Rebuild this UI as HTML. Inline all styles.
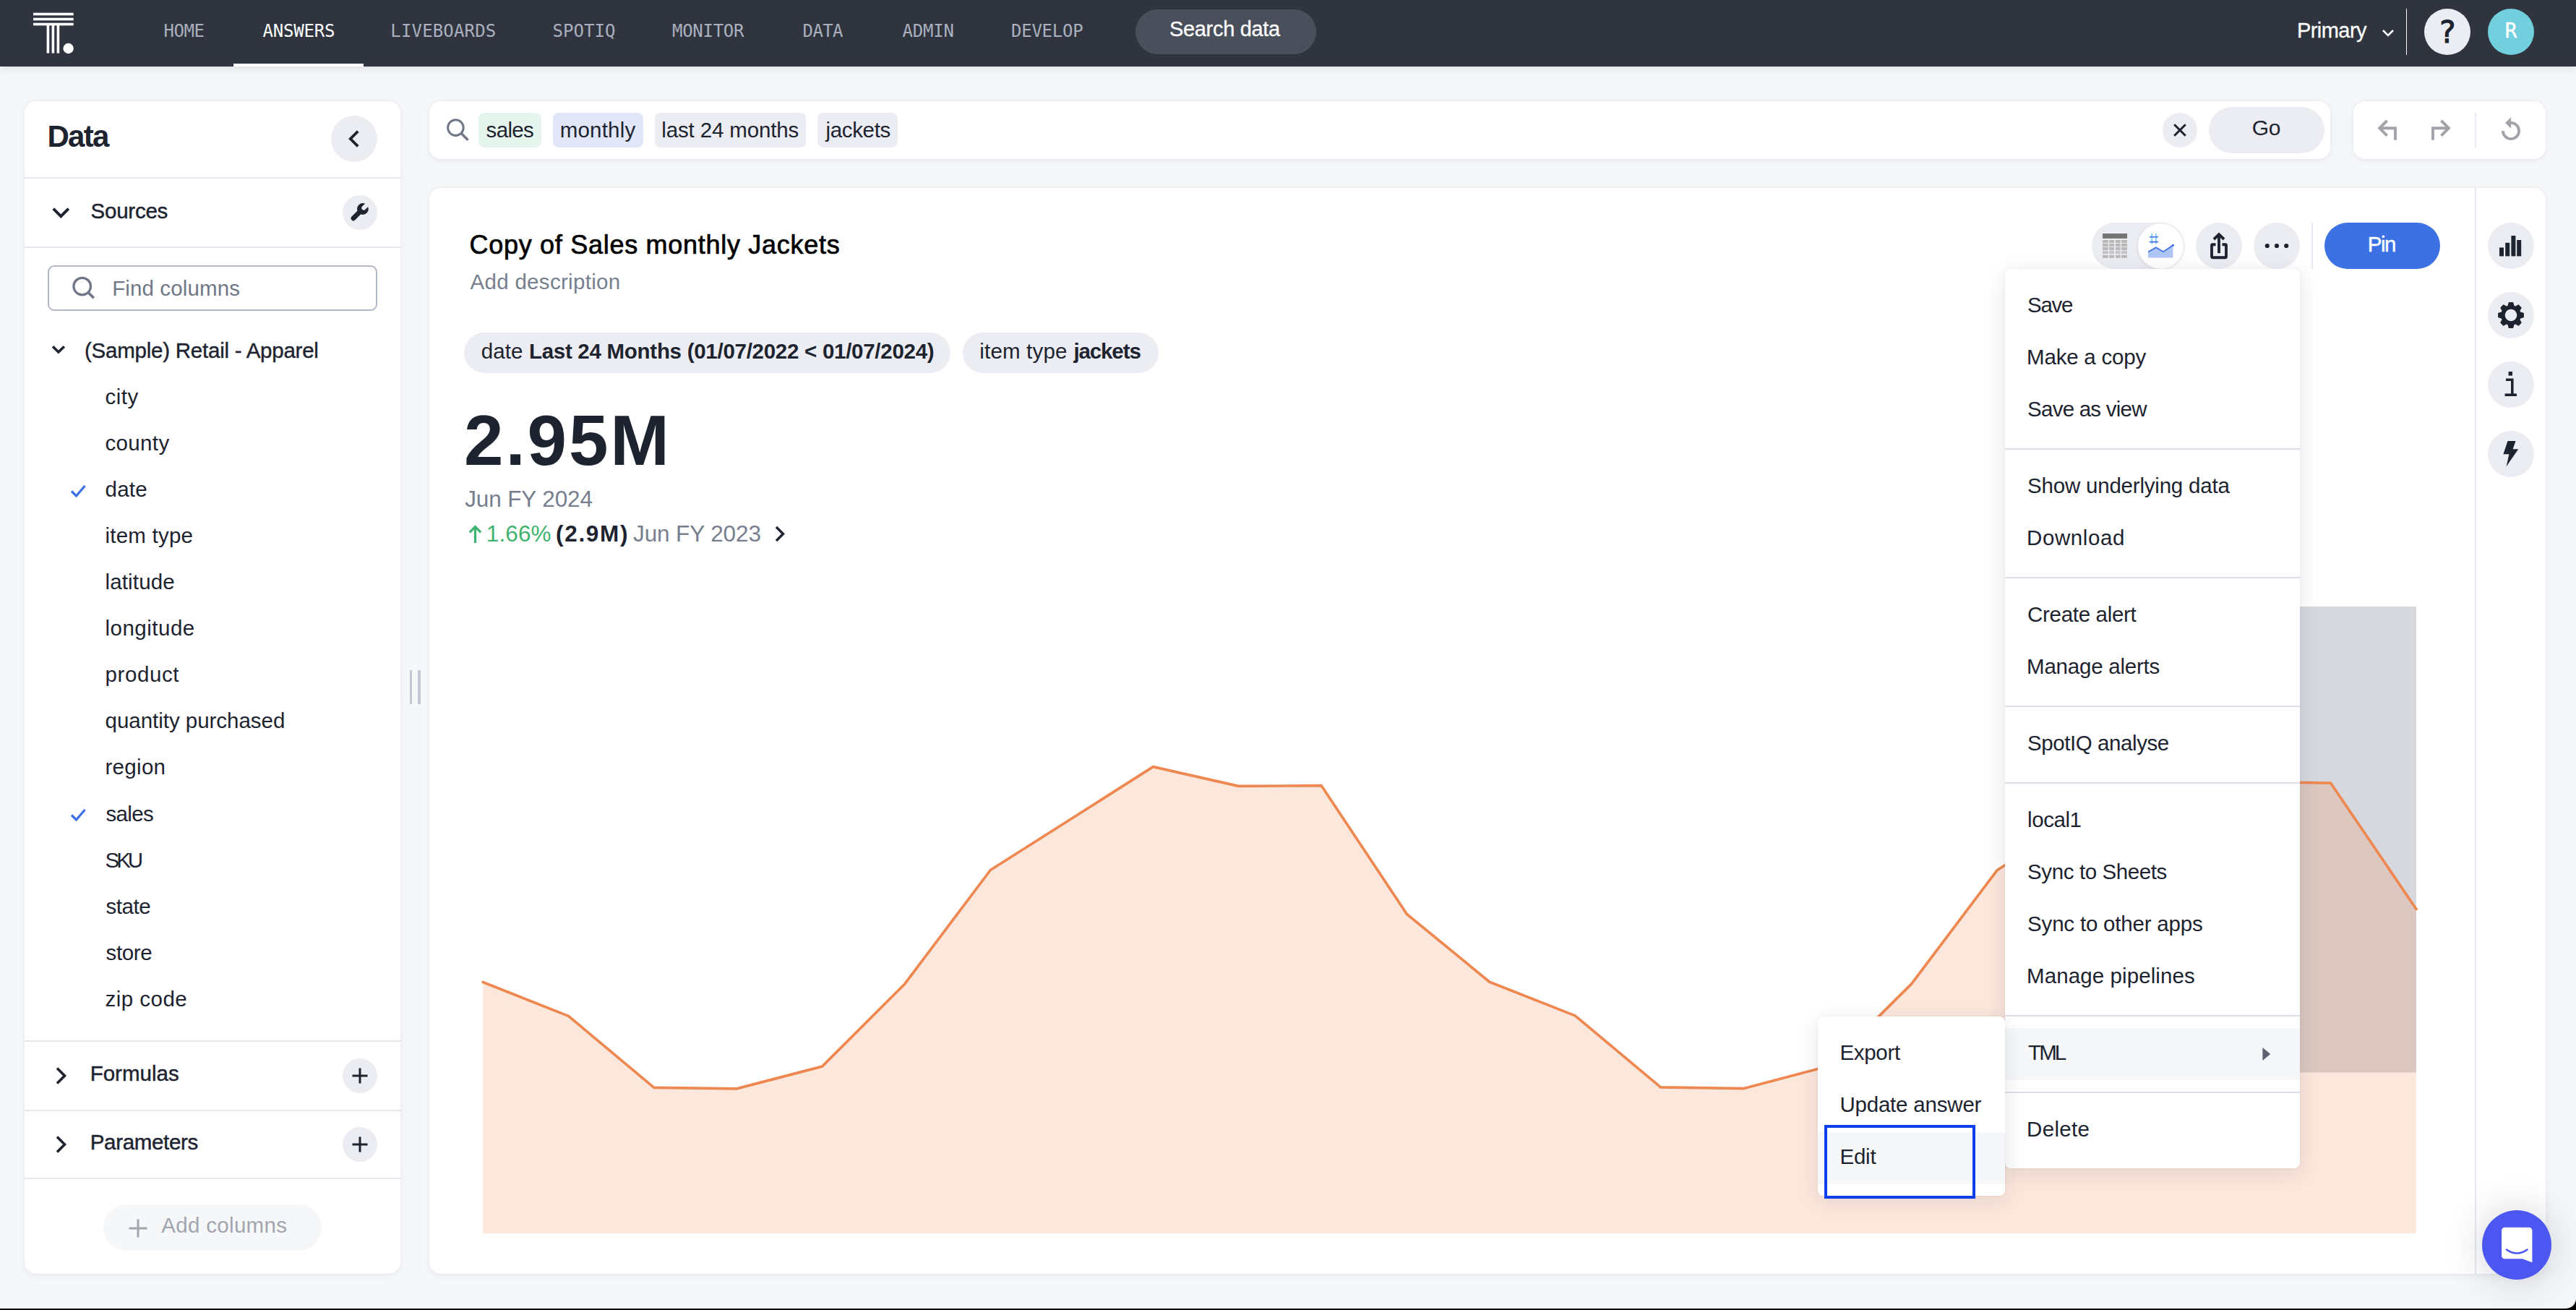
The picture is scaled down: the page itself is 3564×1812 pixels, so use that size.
<!DOCTYPE html>
<html lang="en"><head><meta charset="utf-8"><title>Copy of Sales monthly Jackets</title>
<style>
html,body{margin:0;padding:0}
html{width:3564px;height:1812px}
body{width:3564px;height:1812px;background:#f6f7f9;position:relative;overflow:hidden;font-family:"Liberation Sans",sans-serif;color:#1d232f}
.a{position:absolute;display:block}
.t{position:absolute;line-height:1;white-space:nowrap}
.card{position:absolute;background:#fff;border-radius:16px;box-shadow:0 2px 10px rgba(40,50,80,.07),0 0 3px rgba(40,50,80,.05)}
b{font-weight:700}
</style></head><body>

<nav aria-label="Top navigation">
<div class="a" style="left:0;top:0;width:3564px;height:92px;background:#30343f;box-shadow:0 2px 12px rgba(30,35,50,.13)"></div>
<svg class="a" style="left:0.00px;top:0.00px;" width="120" height="92" viewBox="0 0 120 92"><rect x="46" y="17.7" width="55.7" height="3.6" fill="#fff"/><rect x="46" y="24.7" width="55.7" height="3.6" fill="#fff"/><rect x="46" y="31.7" width="55.7" height="3.6" fill="#fff"/><rect x="64.6" y="35" width="3.6" height="38.6" fill="#fff"/><rect x="71.6" y="35" width="3.6" height="38.6" fill="#fff"/><rect x="78.6" y="35" width="3.6" height="38.6" fill="#fff"/><circle cx="94.6" cy="67" r="7.2" fill="#fff"/></svg>
<div class="t" style="left:226.40px;top:30.70px;font-size:24px;color:#aab0be;letter-spacing:-0.416px;font-family:'DejaVu Sans Mono',monospace;">HOME</div>
<div class="t" style="left:363.40px;top:30.70px;font-size:24px;color:#ffffff;letter-spacing:-0.199px;font-family:'DejaVu Sans Mono',monospace;">ANSWERS</div>
<div class="t" style="left:540.30px;top:30.70px;font-size:24px;color:#aab0be;letter-spacing:0.162px;font-family:'DejaVu Sans Mono',monospace;">LIVEBOARDS</div>
<div class="t" style="left:764.60px;top:30.70px;font-size:24px;color:#aab0be;letter-spacing:0.031px;font-family:'DejaVu Sans Mono',monospace;">SPOTIQ</div>
<div class="t" style="left:930.00px;top:30.70px;font-size:24px;color:#aab0be;letter-spacing:-0.283px;font-family:'DejaVu Sans Mono',monospace;">MONITOR</div>
<div class="t" style="left:1110.60px;top:30.70px;font-size:24px;color:#aab0be;letter-spacing:-0.649px;font-family:'DejaVu Sans Mono',monospace;">DATA</div>
<div class="t" style="left:1248.60px;top:30.70px;font-size:24px;color:#aab0be;letter-spacing:-0.224px;font-family:'DejaVu Sans Mono',monospace;">ADMIN</div>
<div class="t" style="left:1399.00px;top:30.70px;font-size:24px;color:#aab0be;letter-spacing:-0.249px;font-family:'DejaVu Sans Mono',monospace;">DEVELOP</div>
<div class="a" style="left:322.80px;top:88.00px;width:180.30px;height:4.00px;background:#fff;"></div>
<div class="a" style="left:1570.80px;top:13.00px;width:250.00px;height:62.00px;background:#4a4f5c;border-radius:31px;"></div>
<div class="t" style="left:1618.00px;top:26.45px;font-size:29px;color:#fff;letter-spacing:-0.326px;-webkit-text-stroke:0.3px #fff;">Search data</div>
<div class="t" style="left:3178.00px;top:27.65px;font-size:29px;color:#fff;letter-spacing:-0.564px;-webkit-text-stroke:0.3px #fff;">Primary</div>
<svg class="a" style="left:3292.00px;top:36.00px;" width="24" height="20" viewBox="0 0 24 20"><path d="M5 6 L12 13 L19 6" fill="none" stroke="#fff" stroke-width="2.6" stroke-linecap="butt"/></svg>
<div class="a" style="left:3328.90px;top:12.00px;width:1.30px;height:64.00px;background:#ffffff;"></div>
<div class="a" style="left:3354.00px;top:12.00px;width:64.00px;height:64.00px;background:#ecedf2;border-radius:32px;"></div>
<div class="t" style="left:3354.00px;top:24.17px;font-size:42px;color:#1d232f;font-family:'DejaVu Sans Mono',monospace;-webkit-text-stroke:1.1px #1d232f;width:64px;text-align:center;">?</div>
<div class="a" style="left:3442.00px;top:12.00px;width:64.00px;height:64.00px;background:#72cfde;border-radius:32px;"></div>
<div class="t" style="left:3442.00px;top:28.94px;font-size:27.5px;color:#fff;font-family:'DejaVu Sans Mono',monospace;-webkit-text-stroke:0.5px #fff;width:64px;text-align:center;">R</div>
</nav>
<aside aria-label="Data panel">
<div class="card" style="left:34px;top:140px;width:520px;height:1622px"></div>
<div class="t" style="left:65.40px;top:168.15px;font-size:42px;color:#1d232f;font-weight:700;letter-spacing:-1.692px;">Data</div>
<div class="a" style="left:458.00px;top:160.00px;width:64.00px;height:64.00px;background:#ecedf2;border-radius:32px;"></div>
<svg class="a" style="left:474.70px;top:176.00px;" width="32" height="32" viewBox="0 0 32 32"><path d="M20.2 5.6 L9.8 16 L20.2 26.4" fill="none" stroke="#1d232f" stroke-width="3.8"/></svg>
<div class="a" style="left:34.00px;top:245.00px;width:520.00px;height:2.00px;background:#e6e8ef;"></div>
<svg class="a" style="left:70.00px;top:280.00px;" width="28" height="28" viewBox="0 0 28 28"><path d="M3.8 8.6 L14.3 19.1 L24.8 8.6" fill="none" stroke="#1d232f" stroke-width="4"/></svg>
<div class="t" style="left:125.50px;top:277.03px;font-size:29.5px;color:#1d232f;letter-spacing:-0.228px;-webkit-text-stroke:0.45px #1d232f;">Sources</div>
<div class="a" style="left:474.00px;top:270.00px;width:48.00px;height:48.00px;background:#ecedf2;border-radius:24px;"></div>
<svg class="a" style="left:484.00px;top:280.00px;" width="28" height="28" viewBox="0 0 28 28"><path d="M4.9 21.9 L14.5 12.3" stroke="#1d232f" stroke-width="6.6" stroke-linecap="round"/><circle cx="17.9" cy="9" r="7.9" fill="#1d232f"/><path d="M19.3 7.6 L28 -1.1" stroke="#ecedf2" stroke-width="6" stroke-linecap="round"/></svg>
<div class="a" style="left:34.00px;top:341.00px;width:520.00px;height:2.00px;background:#e6e8ef;"></div>
<div class="a" style="left:66.4px;top:367.1px;width:455.2px;height:63.4px;box-sizing:border-box;border:2px solid #b3b8c6;border-radius:9px;background:#fff"></div>
<svg class="a" style="left:98.00px;top:382.00px;" width="36" height="36" viewBox="0 0 36 36"><circle cx="15.7" cy="14.1" r="11.8" fill="none" stroke="#6f7787" stroke-width="3.2"/><path d="M24.3 22.7 L31.8 30.2" stroke="#6f7787" stroke-width="3.6"/></svg>
<div class="t" style="left:155.20px;top:383.53px;font-size:29.5px;color:#6f7787;letter-spacing:0.12px;">Find columns</div>
<svg class="a" style="left:68.00px;top:470.00px;" width="26" height="26" viewBox="0 0 26 26"><path d="M5 9.2 L12.9 17.1 L20.8 9.2" fill="none" stroke="#1d232f" stroke-width="3.5"/></svg>
<div class="t" style="left:117.00px;top:470.23px;font-size:29.5px;color:#1d232f;letter-spacing:-0.235px;-webkit-text-stroke:0.4px #1d232f;">(Sample) Retail - Apparel</div>
<div class="t" style="left:145.50px;top:534.33px;font-size:29.5px;color:#1d232f;letter-spacing:0.467px;">city</div>
<div class="t" style="left:145.50px;top:598.35px;font-size:29.5px;color:#1d232f;letter-spacing:0.347px;">county</div>
<div class="t" style="left:145.50px;top:662.37px;font-size:29.5px;color:#1d232f;letter-spacing:0.264px;">date</div>
<svg class="a" style="left:94.00px;top:665.34px;" width="28" height="28" viewBox="0 0 28 28"><path d="M5 14.5 L11.5 21 L23.5 7" fill="none" stroke="#3b6fe8" stroke-width="3.2"/></svg>
<div class="t" style="left:145.50px;top:726.39px;font-size:29.5px;color:#1d232f;letter-spacing:0.215px;">item type</div>
<div class="t" style="left:145.50px;top:790.41px;font-size:29.5px;color:#1d232f;letter-spacing:0.154px;">latitude</div>
<div class="t" style="left:145.50px;top:854.43px;font-size:29.5px;color:#1d232f;letter-spacing:0.495px;">longitude</div>
<div class="t" style="left:145.50px;top:918.45px;font-size:29.5px;color:#1d232f;letter-spacing:0.6px;">product</div>
<div class="t" style="left:145.50px;top:982.47px;font-size:29.5px;color:#1d232f;letter-spacing:-0.028px;">quantity purchased</div>
<div class="t" style="left:145.50px;top:1046.49px;font-size:29.5px;color:#1d232f;letter-spacing:0.301px;">region</div>
<div class="t" style="left:146.50px;top:1110.51px;font-size:29.5px;color:#1d232f;letter-spacing:-0.654px;">sales</div>
<svg class="a" style="left:94.00px;top:1113.48px;" width="28" height="28" viewBox="0 0 28 28"><path d="M5 14.5 L11.5 21 L23.5 7" fill="none" stroke="#3b6fe8" stroke-width="3.2"/></svg>
<div class="t" style="left:145.50px;top:1174.53px;font-size:29.5px;color:#1d232f;letter-spacing:-4.026px;">SKU</div>
<div class="t" style="left:146.50px;top:1238.55px;font-size:29.5px;color:#1d232f;letter-spacing:-0.437px;">state</div>
<div class="t" style="left:146.50px;top:1302.57px;font-size:29.5px;color:#1d232f;letter-spacing:-0.369px;">store</div>
<div class="t" style="left:145.50px;top:1366.59px;font-size:29.5px;color:#1d232f;letter-spacing:0.476px;">zip code</div>
<div class="a" style="left:34.00px;top:1439.00px;width:520.00px;height:2.00px;background:#e6e8ef;"></div>
<svg class="a" style="left:70.00px;top:1472.00px;" width="30" height="32" viewBox="0 0 30 32"><path d="M9 5.5 L19.5 16 L9 26.5" fill="none" stroke="#1d232f" stroke-width="3.6"/></svg>
<div class="t" style="left:124.70px;top:1470.33px;font-size:29.5px;color:#1d232f;letter-spacing:0.001px;-webkit-text-stroke:0.45px #1d232f;">Formulas</div>
<div class="a" style="left:474.00px;top:1464.00px;width:48.00px;height:48.00px;background:#ecedf2;border-radius:24px;"></div>
<svg class="a" style="left:474.00px;top:1464.00px;" width="48" height="48" viewBox="0 0 48 48"><path d="M24 13.5 V34.5 M13.5 24 H34.5" stroke="#1d232f" stroke-width="3"/></svg>
<div class="a" style="left:34.00px;top:1535.00px;width:520.00px;height:2.00px;background:#e6e8ef;"></div>
<svg class="a" style="left:70.00px;top:1567.00px;" width="30" height="32" viewBox="0 0 30 32"><path d="M9 5.5 L19.5 16 L9 26.5" fill="none" stroke="#1d232f" stroke-width="3.6"/></svg>
<div class="t" style="left:124.70px;top:1565.33px;font-size:29.5px;color:#1d232f;letter-spacing:-0.313px;-webkit-text-stroke:0.45px #1d232f;">Parameters</div>
<div class="a" style="left:474.00px;top:1559.00px;width:48.00px;height:48.00px;background:#ecedf2;border-radius:24px;"></div>
<svg class="a" style="left:474.00px;top:1559.00px;" width="48" height="48" viewBox="0 0 48 48"><path d="M24 13.5 V34.5 M13.5 24 H34.5" stroke="#1d232f" stroke-width="3"/></svg>
<div class="a" style="left:34.00px;top:1629.00px;width:520.00px;height:2.00px;background:#e6e8ef;"></div>
<div class="a" style="left:143.00px;top:1666.00px;width:302.00px;height:64.00px;background:#f6f7f9;border-radius:32px;"></div>
<svg class="a" style="left:176.00px;top:1684.00px;" width="30" height="30" viewBox="0 0 30 30"><path d="M15 2.5 V27.5 M2.5 15 H27.5" stroke="#a2a5ae" stroke-width="3"/></svg>
<div class="t" style="left:223.30px;top:1680.03px;font-size:29.5px;color:#a2a5ae;letter-spacing:0.312px;">Add columns</div>
<div class="a" style="left:566.50px;top:926.60px;width:3.50px;height:47.60px;background:#c3c7d3;"></div>
<div class="a" style="left:578.00px;top:926.60px;width:3.50px;height:47.60px;background:#c3c7d3;"></div>
</aside>
<main>
<div class="card" style="left:594px;top:140px;width:2630px;height:80px"></div>
<svg class="a" style="left:616.00px;top:162.00px;" width="36" height="36" viewBox="0 0 36 36"><circle cx="14.4" cy="14.6" r="10.8" fill="none" stroke="#6f7787" stroke-width="3"/><path d="M22.3 22.5 L31.5 31.7" stroke="#6f7787" stroke-width="3.4"/></svg>
<div class="a" style="left:662.00px;top:156.00px;width:86.80px;height:47.50px;background:#e5f5ee;border-radius:8px;"></div>
<div class="t" style="left:672.60px;top:164.83px;font-size:29.5px;color:#1d232f;letter-spacing:-0.679px;">sales</div>
<div class="a" style="left:765.00px;top:156.00px;width:124.60px;height:47.50px;background:#e1e7f9;border-radius:8px;"></div>
<div class="t" style="left:774.70px;top:164.83px;font-size:29.5px;color:#1d232f;letter-spacing:0.209px;">monthly</div>
<div class="a" style="left:905.80px;top:156.00px;width:208.90px;height:47.50px;background:#ecedf2;border-radius:8px;"></div>
<div class="t" style="left:915.30px;top:164.83px;font-size:29.5px;color:#1d232f;letter-spacing:-0.139px;">last 24 months</div>
<div class="a" style="left:1131.00px;top:156.00px;width:110.60px;height:47.50px;background:#ecedf2;border-radius:8px;"></div>
<div class="t" style="left:1142.50px;top:164.83px;font-size:29.5px;color:#1d232f;letter-spacing:-0.344px;">jackets</div>
<div class="a" style="left:2992.00px;top:156.00px;width:48.00px;height:48.00px;background:#ecedf2;border-radius:24px;"></div>
<svg class="a" style="left:2992.00px;top:156.00px;" width="48" height="48" viewBox="0 0 48 48"><path d="M16.2 16.2 L31.8 31.8 M31.8 16.2 L16.2 31.8" stroke="#1d232f" stroke-width="3"/></svg>
<div class="a" style="left:3056.00px;top:148.00px;width:160.00px;height:64.00px;background:#ecedf2;border-radius:32px;"></div>
<div class="t" style="left:3115.70px;top:162.10px;font-size:30px;color:#1d232f;letter-spacing:-0.235px;">Go</div>
<div class="card" style="left:3256px;top:140px;width:266px;height:80px"></div>
<svg class="a" style="left:3286.00px;top:160.00px;" width="36" height="40" viewBox="0 0 36 40"><path d="M28 33.8 V17.3 H8" fill="none" stroke="#a1a3a9" stroke-width="3.9"/><path d="M16.6 6.9 L6.2 17.3 L16.6 27.7" fill="none" stroke="#a1a3a9" stroke-width="3.9"/></svg>
<svg class="a" style="left:3358.00px;top:160.00px;" width="36" height="40" viewBox="0 0 36 40"><path d="M8 33.8 V17.3 H28" fill="none" stroke="#a1a3a9" stroke-width="3.9"/><path d="M19.5 6.9 L29.9 17.3 L19.5 27.7" fill="none" stroke="#a1a3a9" stroke-width="3.9"/></svg>
<div class="a" style="left:3424.00px;top:156.00px;width:2.00px;height:48.00px;background:#e9eaf3;"></div>
<svg class="a" style="left:3454.00px;top:158.00px;" width="40" height="40" viewBox="0 0 40 40"><path d="M8.9 23 A11.1 11.1 0 1 0 20 11.9" fill="none" stroke="#a1a3a9" stroke-width="3.8"/><path d="M20.2 4.1 L12.1 12 L20.2 19.7 Z" fill="#a1a3a9"/></svg>
<div class="card" style="left:594px;top:260px;width:2928px;height:1502px"></div>
<div class="a" style="left:3424.00px;top:260.00px;width:2.00px;height:1502.00px;background:#e6e8ef;"></div>
<div class="t" style="left:649.50px;top:320.53px;font-size:36px;color:#000;letter-spacing:0.713px;-webkit-text-stroke:0.7px #000;">Copy of Sales monthly Jackets</div>
<div class="t" style="left:650.50px;top:375.03px;font-size:29.5px;color:#777f8f;letter-spacing:0.304px;">Add description</div>
<div class="a" style="left:642.30px;top:460.00px;width:673.00px;height:56.00px;background:#ecedf2;border-radius:28px;"></div>
<div class="t" style="left:665.70px;top:471.03px;font-size:29.5px;color:#1d232f;letter-spacing:0.097px;">date</div>
<div class="t" style="left:731.90px;top:471.03px;font-size:29.5px;color:#1d232f;font-weight:700;letter-spacing:-0.276px;">Last 24 Months (01/07/2022 &lt; 01/07/2024)</div>
<div class="a" style="left:1331.50px;top:460.00px;width:271.50px;height:56.00px;background:#ecedf2;border-radius:28px;"></div>
<div class="t" style="left:1355.30px;top:471.03px;font-size:29.5px;color:#1d232f;letter-spacing:0.178px;">item type</div>
<div class="t" style="left:1485.40px;top:471.03px;font-size:29.5px;color:#1d232f;font-weight:700;letter-spacing:-1.108px;">jackets</div>
<div class="t" style="left:642.00px;top:560.04px;font-size:98px;color:#1d232f;font-weight:700;letter-spacing:2.891px;">2.95M</div>
<div class="t" style="left:643.20px;top:675.34px;font-size:31.5px;color:#777f8f;letter-spacing:-0.13px;">Jun FY 2024</div>
<svg class="a" style="left:644.00px;top:722.00px;" width="28" height="32" viewBox="0 0 28 32"><path d="M13.5 29 V6.5 M5.8 14.3 L13.5 6.6 L21.2 14.3" fill="none" stroke="#3fb36f" stroke-width="3.3"/></svg>
<div class="t" style="left:672.80px;top:723.14px;font-size:31.5px;color:#3fb36f;letter-spacing:0.098px;">1.66%</div>
<div class="t" style="left:769.00px;top:723.14px;font-size:31.5px;color:#1d232f;font-weight:700;letter-spacing:1.696px;">(2.9M)</div>
<div class="t" style="left:876.00px;top:723.14px;font-size:31.5px;color:#777f8f;letter-spacing:-0.11px;">Jun FY 2023</div>
<svg class="a" style="left:1066.00px;top:722.00px;" width="26" height="32" viewBox="0 0 26 32"><path d="M8 7 L17.5 16.5 L8 26" fill="none" stroke="#1d232f" stroke-width="3.4"/></svg>
<svg class="a" style="left:0.00px;top:0.00px;" width="3564" height="1812" viewBox="0 0 3564 1812"><rect x="3182" y="839" width="161" height="644.5" fill="#d7d8de"/><polygon points="668.2,1706.0 668.2,1358.5 786.5,1405.4 904.8,1504.4 1019.2,1505.9 1137.5,1475.1 1252.0,1360.7 1370.3,1203.5 1488.6,1128.5 1595.4,1060.6 1713.7,1087.4 1828.2,1086.7 1946.5,1264.5 2060.9,1358.2 2179.2,1404.9 2297.5,1503.8 2412.0,1505.7 2530.3,1474.5 2644.7,1360.9 2763.0,1203.8 2881.3,1128.0 2992.0,1058.5 3110.2,1081.0 3224.7,1083.2 3343.0,1257.5 3343.0,1706.0" fill="#ee8850" fill-opacity="0.2"/><polyline points="668.2,1358.5 786.5,1405.4 904.8,1504.4 1019.2,1505.9 1137.5,1475.1 1252.0,1360.7 1370.3,1203.5 1488.6,1128.5 1595.4,1060.6 1713.7,1087.4 1828.2,1086.7 1946.5,1264.5 2060.9,1358.2 2179.2,1404.9 2297.5,1503.8 2412.0,1505.7 2530.3,1474.5 2644.7,1360.9 2763.0,1203.8 2881.3,1128.0 2992.0,1058.5 3110.2,1081.0 3224.7,1083.2 3343.0,1257.5" fill="none" stroke="#ee8850" stroke-width="3.7" stroke-linejoin="round" stroke-linecap="round"/></svg>
<div class="a" style="left:2894.00px;top:308.00px;width:128.00px;height:64.00px;background:#ecedf2;border-radius:32px;"></div>
<svg class="a" style="left:2909.00px;top:323.00px;" width="34" height="35" viewBox="0 0 34 35"><rect x="0" y="0" width="34" height="6.9" fill="#757575"/><rect x="0" y="8.9" width="7.9" height="4.0" fill="#b8b8b8"/><rect x="9.2" y="8.9" width="6.8" height="4.0" fill="#b8b8b8"/><rect x="17.9" y="8.9" width="6.8" height="4.0" fill="#b8b8b8"/><rect x="26.1" y="8.9" width="7.9" height="4.0" fill="#b8b8b8"/><rect x="0" y="13.9" width="7.9" height="4.1" fill="#b8b8b8"/><rect x="9.2" y="13.9" width="6.8" height="4.1" fill="#b8b8b8"/><rect x="17.9" y="13.9" width="6.8" height="4.1" fill="#b8b8b8"/><rect x="26.1" y="13.9" width="7.9" height="4.1" fill="#b8b8b8"/><rect x="0" y="19.0" width="7.9" height="4.1" fill="#b8b8b8"/><rect x="9.2" y="19.0" width="6.8" height="4.1" fill="#b8b8b8"/><rect x="17.9" y="19.0" width="6.8" height="4.1" fill="#b8b8b8"/><rect x="26.1" y="19.0" width="7.9" height="4.1" fill="#b8b8b8"/><rect x="0" y="24.1" width="7.9" height="4.1" fill="#c4c4c8"/><rect x="9.2" y="24.1" width="6.8" height="4.1" fill="#c4c4c8"/><rect x="17.9" y="24.1" width="6.8" height="4.1" fill="#c4c4c8"/><rect x="26.1" y="24.1" width="7.9" height="4.1" fill="#c4c4c8"/><rect x="0" y="29.8" width="7.9" height="4.0" fill="#b8b8b8"/><rect x="9.2" y="29.8" width="6.8" height="4.0" fill="#b8b8b8"/><rect x="17.9" y="29.8" width="6.8" height="4.0" fill="#b8b8b8"/><rect x="26.1" y="29.8" width="7.9" height="4.0" fill="#b8b8b8"/></svg>
<div class="a" style="left:2958px;top:308.5px;width:63px;height:63px;border-radius:32px;background:#fff;box-shadow:0 1px 5px rgba(40,50,80,.12)"></div>
<svg class="a" style="left:2972.20px;top:323.00px;" width="37" height="35" viewBox="0 0 37 35"><path d="M5.3 0 V14.6 M10.9 0 V14.6" stroke="#6ac8f0" stroke-width="1.6" fill="none"/><path d="M1.9 4.8 H13.9 M1.9 11.6 H13.9" stroke="#3b71e3" stroke-width="1.6" fill="none"/><path d="M0 25.5 L10.9 19.3 L21 25.3 L34.4 16.3 V33.5 H0 Z" fill="#aec5f5"/><path d="M0 25.5 L10.9 19.3 L21 25.3 L34.4 16.3" fill="none" stroke="#3b71e3" stroke-width="1.7"/><circle cx="34.4" cy="16.3" r="1.6" fill="#3b71e3"/></svg>
<div class="a" style="left:3038.00px;top:308.00px;width:64.00px;height:64.00px;background:#ecedf2;border-radius:32px;"></div>
<svg class="a" style="left:3038.00px;top:308.00px;" width="64" height="64" viewBox="0 0 64 64"><path d="M27.5 30.2 H23.2 a1.2 1.2 0 0 0 -1.2 1.2 V47 a1.2 1.2 0 0 0 1.2 1.2 H40.8 a1.2 1.2 0 0 0 1.2 -1.2 V31.4 a1.2 1.2 0 0 0 -1.2 -1.2 H36.5" fill="none" stroke="#1d232f" stroke-width="3.85"/><path d="M32 42.2 V18" stroke="#1d232f" stroke-width="3.85"/><path d="M25 23 L32 16.2 L39 23" fill="none" stroke="#1d232f" stroke-width="3.85"/></svg>
<div class="a" style="left:3118.00px;top:308.00px;width:64.00px;height:64.00px;background:#ecedf2;border-radius:32px;"></div>
<svg class="a" style="left:3118.00px;top:308.00px;" width="64" height="64" viewBox="0 0 64 64"><circle cx="18.8" cy="32" r="3.1" fill="#1d232f"/><circle cx="32" cy="32" r="3.1" fill="#1d232f"/><circle cx="45.2" cy="32" r="3.1" fill="#1d232f"/></svg>
<div class="a" style="left:3198.00px;top:308.00px;width:2.00px;height:64.00px;background:#e6e8ef;"></div>
<div class="a" style="left:3216.00px;top:308.00px;width:160.00px;height:64.00px;background:#3b71e3;border-radius:32px;"></div>
<div class="t" style="left:3275.70px;top:323.13px;font-size:29.5px;color:#fff;letter-spacing:-1.465px;-webkit-text-stroke:0.4px #fff;">Pin</div>
<div class="a" style="left:3442.00px;top:308.00px;width:64.00px;height:64.00px;background:#ecedf2;border-radius:32px;"></div>
<div class="a" style="left:3442.00px;top:404.00px;width:64.00px;height:64.00px;background:#ecedf2;border-radius:32px;"></div>
<div class="a" style="left:3442.00px;top:500.00px;width:64.00px;height:64.00px;background:#ecedf2;border-radius:32px;"></div>
<div class="a" style="left:3442.00px;top:596.00px;width:64.00px;height:64.00px;background:#ecedf2;border-radius:32px;"></div>
<svg class="a" style="left:3457.80px;top:325.70px;" width="31" height="29" viewBox="0 0 31 29"><rect x="0" y="16.4" width="6" height="12" fill="#1d232f"/><rect x="8.2" y="9.8" width="6" height="18.6" fill="#1d232f"/><rect x="16.4" y="0" width="6" height="28.4" fill="#1d232f"/><rect x="24.2" y="6" width="6" height="22.4" fill="#1d232f"/></svg>
<svg class="a" style="left:3453.80px;top:416.20px;" width="40" height="40" viewBox="0 0 40 40"><path fill-rule="evenodd" d="M16.13,7.49 L17.41,2.89 L22.59,2.89 L23.87,7.49 L26.11,8.41 L30.27,6.08 L33.92,9.73 L31.59,13.89 L32.51,16.13 L37.11,17.41 L37.11,22.59 L32.51,23.87 L31.59,26.11 L33.92,30.27 L30.27,33.92 L26.11,31.59 L23.87,32.51 L22.59,37.11 L17.41,37.11 L16.13,32.51 L13.89,31.59 L9.73,33.92 L6.08,30.27 L8.41,26.11 L7.49,23.87 L2.89,22.59 L2.89,17.41 L7.49,16.13 L8.41,13.89 L6.08,9.73 L9.73,6.08 L13.89,8.41 Z M20 11 a9 9 0 1 0 0.01 0 Z" fill="#1d232f" stroke="#1d232f" stroke-width="1.6" stroke-linejoin="round"/></svg>
<svg class="a" style="left:3462.00px;top:510.00px;" width="24" height="42" viewBox="0 0 24 42"><rect x="8.6" y="4" width="5.4" height="5.6" fill="#1d232f"/><path d="M5 15.2 H13.8 V36" fill="none" stroke="#1d232f" stroke-width="3.6"/><path d="M3.6 36.2 H20" stroke="#1d232f" stroke-width="3.6"/></svg>
<svg class="a" style="left:3460.00px;top:606.00px;" width="28" height="42" viewBox="0 0 28 42"><path d="M9.5 4 H20.5 L16.6 15.2 H24.2 L7.6 39.2 L11.4 22.2 H3.4 Z" fill="#1d232f"/></svg>
<div class="a" style="left:3434px;top:1674px;width:96px;height:96px;border-radius:48px;background:#4b57f0;box-shadow:0 2px 56px rgba(30,35,60,.2)"></div>
<svg class="a" style="left:3434.00px;top:1674.00px;" width="96" height="96" viewBox="0 0 96 96"><path d="M31.5 23.8 H65 a4.4 4.4 0 0 1 4.4 4.4 V72.2 L56 67.3 H31.5 a4.4 4.4 0 0 1 -4.4 -4.4 V28.2 a4.4 4.4 0 0 1 4.4 -4.4 Z" fill="#fff"/><path d="M34 54.5 Q48 64.5 62.6 54.5" fill="none" stroke="#4b57f0" stroke-width="2.6" stroke-linecap="round"/></svg>
<div class="a" style="left:0.00px;top:1810.00px;width:3564.00px;height:2.00px;background:#000;"></div>
<svg class="a" style="left:3524.00px;top:1772.00px;" width="40" height="40" viewBox="0 0 40 40"><path d="M40 14 V40 H14 V38 H26 A14 14 0 0 0 40 24 Z" fill="#000"/></svg>
</main>
<div role="menu" aria-label="More actions">
<div class="a" style="left:2774px;top:372px;width:408px;height:1244px;background:#fff;border-radius:8px;box-shadow:0 6px 30px rgba(30,35,60,.11),0 0 4px rgba(30,35,60,.05);"></div>
<div class="t" style="left:2805.10px;top:406.63px;font-size:29.5px;color:#1d232f;letter-spacing:-1.311px;">Save</div>
<div class="t" style="left:2804.10px;top:478.63px;font-size:29.5px;color:#1d232f;letter-spacing:-0.22px;">Make a copy</div>
<div class="t" style="left:2805.10px;top:550.63px;font-size:29.5px;color:#1d232f;letter-spacing:-0.763px;">Save as view</div>
<div class="a" style="left:2774.00px;top:620.00px;width:408.00px;height:2.00px;background:#dcdfe8;"></div>
<div class="t" style="left:2805.10px;top:656.63px;font-size:29.5px;color:#1d232f;letter-spacing:-0.211px;">Show underlying data</div>
<div class="t" style="left:2804.10px;top:728.63px;font-size:29.5px;color:#1d232f;letter-spacing:0.587px;">Download</div>
<div class="a" style="left:2774.00px;top:798.00px;width:408.00px;height:2.00px;background:#dcdfe8;"></div>
<div class="t" style="left:2805.10px;top:834.63px;font-size:29.5px;color:#1d232f;letter-spacing:-0.321px;">Create alert</div>
<div class="t" style="left:2804.10px;top:906.63px;font-size:29.5px;color:#1d232f;letter-spacing:-0.232px;">Manage alerts</div>
<div class="a" style="left:2774.00px;top:976.00px;width:408.00px;height:2.00px;background:#dcdfe8;"></div>
<div class="t" style="left:2805.10px;top:1012.63px;font-size:29.5px;color:#1d232f;letter-spacing:-0.431px;">SpotIQ analyse</div>
<div class="a" style="left:2774.00px;top:1082.00px;width:408.00px;height:2.00px;background:#dcdfe8;"></div>
<div class="t" style="left:2805.10px;top:1118.63px;font-size:29.5px;color:#1d232f;letter-spacing:-0.454px;">local1</div>
<div class="t" style="left:2805.10px;top:1190.63px;font-size:29.5px;color:#1d232f;letter-spacing:-0.398px;">Sync to Sheets</div>
<div class="t" style="left:2805.10px;top:1262.63px;font-size:29.5px;color:#1d232f;letter-spacing:-0.196px;">Sync to other apps</div>
<div class="t" style="left:2804.10px;top:1334.63px;font-size:29.5px;color:#1d232f;letter-spacing:0.094px;">Manage pipelines</div>
<div class="a" style="left:2774.00px;top:1404.00px;width:408.00px;height:2.00px;background:#dcdfe8;"></div>
<div class="a" style="left:2774.00px;top:1422.00px;width:408.00px;height:72.00px;background:#f6f7f9;"></div>
<svg class="a" style="left:3128.00px;top:1446.00px;" width="16" height="24" viewBox="0 0 16 24"><path d="M2.4 3 L13.2 12 L2.4 21 Z" fill="#5d6271"/></svg>
<div class="t" style="left:2806.10px;top:1440.63px;font-size:29.5px;color:#1d232f;letter-spacing:-2.947px;">TML</div>
<div class="a" style="left:2774.00px;top:1510.00px;width:408.00px;height:2.00px;background:#dcdfe8;"></div>
<div class="t" style="left:2804.10px;top:1546.63px;font-size:29.5px;color:#1d232f;letter-spacing:0.287px;">Delete</div>
<div class="a" style="left:2515px;top:1406px;width:259px;height:248px;background:#fff;border-radius:8px;box-shadow:0 6px 30px rgba(30,35,60,.11),0 0 4px rgba(30,35,60,.05);"></div>
<div class="t" style="left:2545.40px;top:1440.93px;font-size:29.5px;color:#1d232f;letter-spacing:-0.313px;">Export</div>
<div class="t" style="left:2545.40px;top:1512.93px;font-size:29.5px;color:#1d232f;letter-spacing:-0.2px;">Update answer</div>
<div class="a" style="left:2515.00px;top:1566.00px;width:259.00px;height:72.00px;background:#f6f7f9;"></div>
<div class="t" style="left:2545.40px;top:1584.93px;font-size:29.5px;color:#1d232f;letter-spacing:-0.179px;">Edit</div>
<div class="a" style="left:2524px;top:1556px;width:209px;height:102px;box-sizing:border-box;border:4px solid #0f3fe8"></div>
</div>
</body></html>
